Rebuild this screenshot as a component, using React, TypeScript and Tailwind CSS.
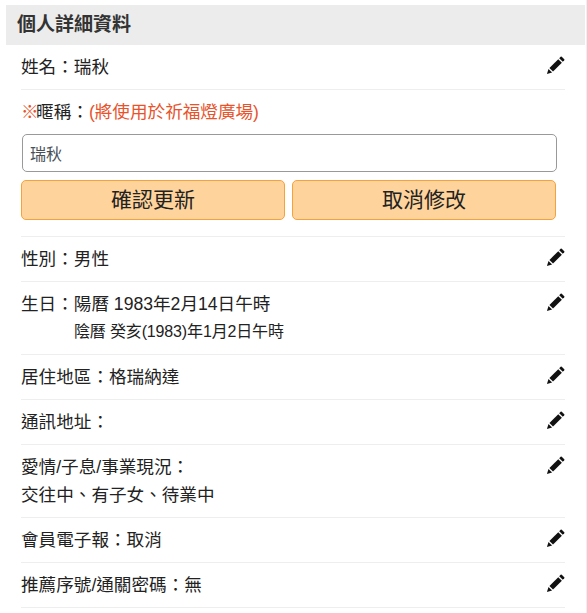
const font = { fontFamily: '"Liberation Sans", "Noto Sans CJK TC", sans-serif' };

function PencilIcon() {
  return (
    <svg className="w-[19px] h-[19px] mt-[3px] shrink-0" viewBox="0 0 20 20" fill="#111111">
      <path d="M1 19 L2.6 13.6 L6.4 17.4 Z" />
      <path d="M3.6 12.6 L12.9 3.3 L16.7 7.1 L7.4 16.4 Z" />
      <path d="M13.9 2.3 L15.4 0.8 Q16 0.3 16.6 0.8 L19.2 3.4 Q19.7 4 19.2 4.6 L17.7 6.1 Z" />
    </svg>
  );
}

function Row({ children }: { children: React.ReactNode }) {
  return (
    <div className="flex justify-between items-start py-2 border-b border-[#eeeeee] text-[17.6px] leading-[28px] text-[#222222]">
      <div>{children}</div>
      <PencilIcon />
    </div>
  );
}

export default function App() {
  return (
    <div className="w-[587px] h-[613px] bg-white overflow-hidden pt-[5px] pl-[6px] pr-px border-r border-[#eeeeee]" style={font}>
      <h2 className="h-[40px] bg-[#ececec] pl-[11px] text-[19px] leading-[40px] font-bold text-[#333333]">個人詳細資料</h2>
      <div className="ml-[15px] mr-[20px]">
        <Row>姓名&#xFF1A;瑞秋</Row>

        <div className="pt-2 pb-4 border-b border-[#eeeeee]">
          <p className="text-[17.6px] leading-[28px] text-[#222222]">
            <span className="text-[#e8532b] tracking-[-2.5px]">※</span>暱稱&#xFF1A;<span className="text-[#e8532b]">(將使用於祈福燈廣場)</span>
          </p>
          <input
            className="block mt-2 ml-px w-[535px] h-[38px] px-[7px] text-[16px] text-[#495057] bg-white border border-[#999999] rounded-[5px]"
            defaultValue="瑞秋"
          />
          <div className="flex gap-[7px] mt-2">
            <button className="w-[264px] h-[40px] text-[21px] text-[#222222] bg-[#fed49c] border border-[#f5a23c] rounded-[5px]">確認更新</button>
            <button className="w-[264px] h-[40px] text-[21px] text-[#222222] bg-[#fed49c] border border-[#f5a23c] rounded-[5px]">取消修改</button>
          </div>
        </div>

        <Row>性別&#xFF1A;男性</Row>
        <Row>
          生日&#xFF1A;陽曆 1983年2月14日午時
          <div className="pl-[53px] text-[16px] tracking-[-0.15px]">陰曆 癸亥(1983)年1月2日午時</div>
        </Row>
        <Row>居住地區&#xFF1A;格瑞納達</Row>
        <Row>通訊地址&#xFF1A;</Row>
        <Row>
          愛情/子息/事業現況&#xFF1A;
          <div>交往中、有子女、待業中</div>
        </Row>
        <Row>會員電子報&#xFF1A;取消</Row>
        <Row>推薦序號/通關密碼&#xFF1A;無</Row>
      </div>
    </div>
  );
}
